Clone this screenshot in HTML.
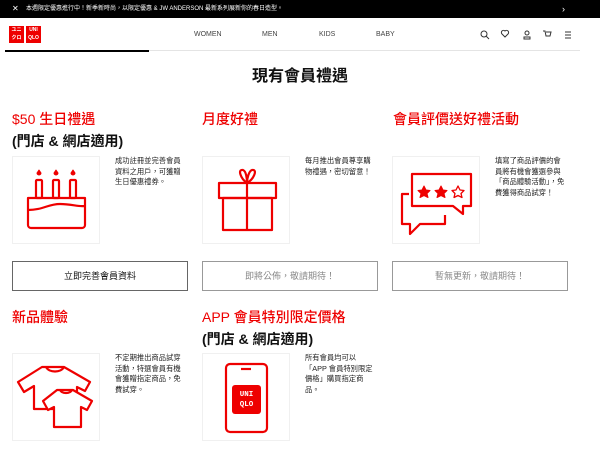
<!DOCTYPE html><html><head><meta charset="utf-8"><style>
*{margin:0;padding:0;box-sizing:border-box}
body{width:600px;height:452px;overflow:hidden;background:#fff;font-family:"Liberation Sans","Noto Sans CJK TC",sans-serif;position:relative}
.a{position:absolute}
.top{left:0;top:0;width:600px;height:18px;background:#000;color:#fff;font-size:6px;line-height:18px}
.nav{font-size:7px;color:#444;top:31px}
.t{font-size:14px;color:#e00;font-weight:500;white-space:nowrap}
.s{font-size:14px;color:#111;font-weight:bold;white-space:nowrap}
.box{width:88px;height:88px;border:1px solid #f0f0f0}
.d{font-size:7.3px;line-height:10.5px;color:#222;width:72px}
.btn{width:176px;height:30px;border:1px solid #999;font-size:9px;text-align:center;line-height:28px;color:#888}
svg{position:absolute;left:0;top:0}
</style></head><body>
<div class="a top"><span style="position:absolute;left:12px;font-size:8px">✕</span><span style="position:absolute;left:26px">本週限定優惠進行中！新季新時尚，以限定優惠 &amp; JW ANDERSON 最新系列展新你的春日造型。</span><span style="position:absolute;left:562px;font-size:9px">›</span></div>
<div class="a" style="left:9px;top:26px;width:15px;height:17px;background:#e00;color:#fff;font-size:5px;text-align:center;line-height:8px;font-weight:bold">ユニ<br>クロ</div>
<div class="a" style="left:26px;top:26px;width:15px;height:17px;background:#e00;color:#fff;font-size:5px;text-align:center;line-height:8px;font-weight:bold">UNI<br>QLO</div>
<div class="a nav" style="left:194px">WOMEN</div><div class="a nav" style="left:262px">MEN</div><div class="a nav" style="left:319px">KIDS</div><div class="a nav" style="left:376px">BABY</div>
<svg width="600" height="60" fill="none" stroke="#333" stroke-width="1"><circle cx="484" cy="34" r="3"/><path d="M486 36l3 3"/><path d="M505 37l-3-3a2 2 0 0 1 3-3a2 2 0 0 1 3 3z"/><circle cx="527" cy="33" r="2"/><path d="M524 39v-2h6v2z"/><path d="M543 31h2l1 5h4l1-4h-5"/><path d="M565 32h6M565 35h6M565 38h6"/></svg>
<div class="a" style="left:5px;top:50px;width:575px;height:1px;background:#e4e4e4"></div>
<div class="a" style="left:5px;top:50px;width:144px;height:2px;background:#000"></div>
<div class="a" style="left:0;top:62px;width:600px;text-align:center;font-size:16px;font-weight:bold;color:#111">現有會員禮遇</div>

<div class="a t" style="left:12px;top:109px">$50 生日禮遇</div>
<div class="a s" style="left:12px;top:131px">(門店 &amp; 網店適用)</div>
<div class="a t" style="left:202px;top:109px">月度好禮</div>
<div class="a t" style="left:393px;top:109px">會員評價送好禮活動</div>

<div class="a box" style="left:12px;top:156px"></div>
<div class="a box" style="left:202px;top:156px"></div>
<div class="a box" style="left:392px;top:156px"></div>
<div class="a d" style="left:115px;top:156px">成功註冊並完善會員資料之用戶，可獲贈生日優惠禮券。</div>
<div class="a d" style="left:305px;top:156px">每月推出會員尊享購物禮遇，密切留意！</div>
<div class="a d" style="left:495px;top:156px">填寫了商品評價的會員將有機會獲選參與「商品體驗活動」，免費獲得商品試穿！</div>

<div class="a btn" style="left:12px;top:261px;color:#111;border-color:#666">立即完善會員資料</div>
<div class="a btn" style="left:202px;top:261px">即將公佈，敬請期待！</div>
<div class="a btn" style="left:392px;top:261px">暫無更新，敬請期待！</div>

<div class="a t" style="left:12px;top:307px">新品體驗</div>
<div class="a t" style="left:202px;top:307px">APP 會員特別限定價格</div>
<div class="a s" style="left:202px;top:329px">(門店 &amp; 網店適用)</div>
<div class="a box" style="left:12px;top:353px"></div>
<div class="a box" style="left:202px;top:353px"></div>
<div class="a d" style="left:115px;top:353px">不定期推出商品試穿活動，特選會員有機會獲贈指定商品，免費試穿。</div>
<div class="a d" style="left:305px;top:353px">所有會員均可以「APP 會員特別限定價格」購買指定商品。</div>

<svg width="600" height="452" fill="none" stroke="#e00" stroke-width="2.2" stroke-linejoin="round">
<!-- cake -->
<rect x="36" y="180" width="6" height="18" rx="1"/><rect x="53" y="180" width="6" height="18" rx="1"/><rect x="70" y="180" width="6" height="18" rx="1"/>
<path d="M28 198h57v27a3 3 0 0 1-3 3h-51a3 3 0 0 1-3-3z"/>
<path d="M28 210c15 0 20-6 32-6s18 3 25 2"/>
<path d="M39 170l2 3a2 2 0 1 1-4 0z M56 170l2 3a2 2 0 1 1-4 0z M73 170l2 3a2 2 0 1 1-4 0z" fill="#e00" stroke-width="1"/>
<!-- gift -->
<rect x="219" y="183" width="57" height="15"/><rect x="223" y="198" width="49" height="32"/><path d="M247 183v47"/>
<path d="M247 183c-6-4-10-14-4-13c3 1 4 8 4 13c0-5 2-12 5-13c6-1 2 9-5 13"/>
<!-- review -->
<path d="M412 174h59v32h-8v8l-10-8h-41z"/><path d="M409 194h-7v30h8v10l10-10h25v-9"/>
<path d="M424 186l2 4 4 .5-3 3 1 4-4-2-4 2 1-4-3-3 4-.5z" fill="#e00" stroke-width="1"/>
<path d="M441 186l2 4 4 .5-3 3 1 4-4-2-4 2 1-4-3-3 4-.5z" fill="#e00" stroke-width="1"/>
<path d="M458 186l2 4 4 .5-3 3 1 4-4-2-4 2 1-4-3-3 4-.5z" stroke-width="1.3"/>
<!-- shirts -->
<path d="M42 367h22l26 15-5 9-8-4v22h-43v-23l-10 6-6-10z"/><path d="M46 367c3 6 15 6 18 0"/>
<path d="M57 390h16l19 11-5 9-6-3v20h-27v-20l-6 3-5-9z" fill="#fff"/><path d="M60 390c2 4 10 4 12 0"/>
<!-- phone -->
<rect x="226" y="364" width="41" height="68" rx="4"/><path d="M241 369h10"/>
</svg>
<div class="a" style="left:232px;top:385px;width:29px;height:29px;background:#e00;border-radius:3px;color:#fff;font-family:'Liberation Mono',monospace;font-weight:bold;font-size:7.5px;line-height:10px;text-align:center;padding-top:5px">UNI<br>QLO</div>
</body></html>
